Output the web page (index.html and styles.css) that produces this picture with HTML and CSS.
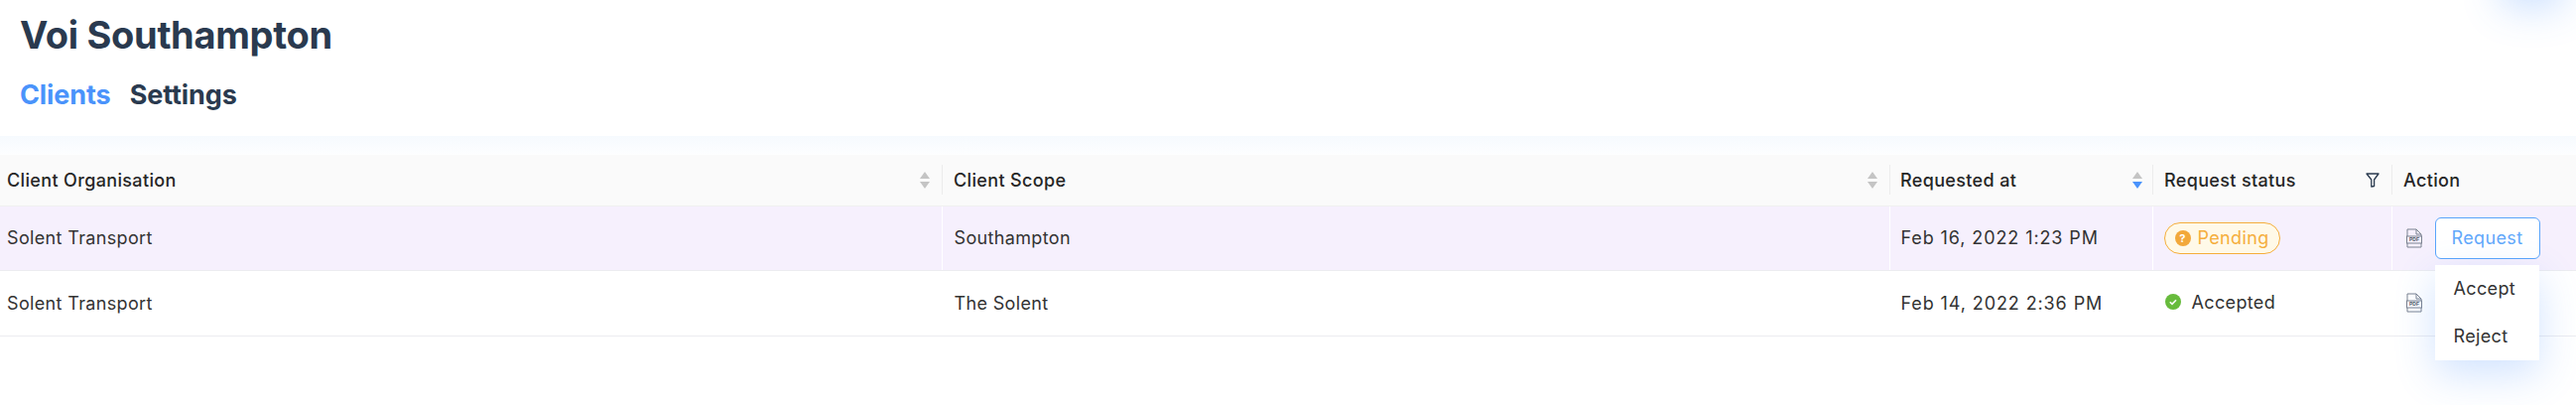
FILE: index.html
```html
<!DOCTYPE html>
<html lang="en">
  <head>
    <meta charset="UTF-8" />
    <title>Voi Southampton</title>
    <link rel="stylesheet" href="styles.css">
  </head>
  <body>
    <div class="corner-glow"></div>
    <header class="page-header">
      <h1>Voi Southampton</h1>
      <nav class="tabs">
        <a class="tab active">Clients</a>
        <a class="tab">Settings</a>
      </nav>
    </header>
    <div class="header-fade"></div>

    <table class="clients">
      <colgroup>
        <col class="col-org" />
        <col class="col-scope" />
        <col class="col-date" />
        <col class="col-status" />
        <col />
      </colgroup>
      <thead>
        <tr>
          <th class="first">
            <div class="th-inner">Client Organisation
              <svg class="sorter" viewBox="0 0 10 17"><path class="off" d="M5 0l5 7H0z" /><path class="off" d="M5 17l5-7H0z" /></svg>
            </div>
          </th>
          <th>
            <div class="th-inner">Client Scope
              <svg class="sorter" viewBox="0 0 10 17"><path class="off" d="M5 0l5 7H0z" /><path class="off" d="M5 17l5-7H0z" /></svg>
            </div>
          </th>
          <th class="date">
            <div class="th-inner">Requested at
              <svg class="sorter" viewBox="0 0 10 17"><path class="off" d="M5 0l5 7H0z" /><path class="on" d="M5 17l5-7H0z" /></svg>
            </div>
          </th>
          <th>
            <div class="th-inner">Request status
              <svg class="filter" viewBox="0 0 14 15"><path d="M1 1h12L8.6 7v6.5L5.8 14V7z" /></svg>
            </div>
          </th>
          <th>Action</th>
        </tr>
      </thead>
      <tbody>
        <tr class="selected">
          <td class="first">Solent Transport</td>
          <td>Southampton</td>
          <td class="date">Feb 16, 2022 1:23 PM</td>
          <td>
            <span class="badge-pending">
              <span class="pending-dot">?</span>Pending
            </span>
          </td>
          <td>
            <div class="action-cell">
              <svg class="pdf" viewBox="0 0 16 20"><path d="M1 8V1h9l5 5v2M1 15v4h14v-4M10 1v5h5" /><rect x="0.5" y="8" width="15" height="7" /><text x="8" y="13.4" text-anchor="middle">PDF</text></svg>
              <div class="request-wrap">
                <button class="request-btn">Request</button>
                <ul class="menu">
                  <li>Accept</li>
                  <li>Reject</li>
                </ul>
              </div>
            </div>
          </td>
        </tr>
        <tr>
          <td class="first">Solent Transport</td>
          <td>The Solent</td>
          <td class="date">Feb 14, 2022 2:36 PM</td>
          <td>
            <span class="status-accepted">
              <svg class="check" viewBox="0 0 16 16"><circle cx="8" cy="8" r="8" /><path d="M4.8 8.2l2.2 2.2 4-4.2" /></svg>Accepted
            </span>
          </td>
          <td>
            <div class="action-cell">
              <svg class="pdf" viewBox="0 0 16 20"><path d="M1 8V1h9l5 5v2M1 15v4h14v-4M10 1v5h5" /><rect x="0.5" y="8" width="15" height="7" /><text x="8" y="13.4" text-anchor="middle">PDF</text></svg>
            </div>
          </td>
        </tr>
      </tbody>
    </table>
  </body>
</html>
```

FILE: styles.css
```css
* {
  margin: 0;
  padding: 0;
  box-sizing: border-box;
}
html,
body {
  height: 408px;
  overflow: hidden;
}
body {
  position: relative;
  font-family: Inter, "Liberation Sans", sans-serif;
  background: #fff;
  color: #262626;
}
.corner-glow {
  position: absolute;
  top: -60px;
  right: 14px;
  width: 60px;
  height: 60px;
  box-shadow: 0 6px 40px rgba(64, 140, 255, 0.3);
}
.page-header {
  height: 137px;
  padding: 13px 20px 0;
}
h1 {
  font-size: 38px;
  line-height: 44px;
  font-weight: 700;
  letter-spacing: -0.3px;
  color: #2a3a4f;
}
.tabs {
  display: flex;
  gap: 19px;
  margin-top: 22px;
}
.tab {
  font-size: 27px;
  line-height: 34px;
  font-weight: 700;
  letter-spacing: -0.1px;
  color: #2a3a4f;
}
.tab.active {
  color: #4a93fb;
}
.header-fade {
  height: 19px;
  background: linear-gradient(to bottom, #f6fafe, #fdfeff);
}
.clients {
  width: 100%;
  table-layout: fixed;
  border-collapse: collapse;
  font-size: 18px;
  letter-spacing: 0.35px;
}
.col-org {
  width: 949px;
}
.col-scope {
  width: 955px;
}
.col-date {
  width: 265px;
}
.col-status {
  width: 241px;
}
th {
  position: relative;
  height: 51px;
  padding: 0 12px;
  background: #fafafa;
  border-bottom: 1px solid #f0f0f0;
  font-weight: 450;
  text-align: left;
}
th + th::before {
  content: "";
  position: absolute;
  left: 0;
  top: 10px;
  height: 30px;
  width: 1px;
  background: #ececec;
}
th.first,
td.first {
  padding-left: 7px;
}
th.date,
td.date {
  padding: 0 10px 0 11px;
}
td.date {
  letter-spacing: 0.9px;
}
.th-inner {
  display: flex;
  align-items: center;
  justify-content: space-between;
}
.sorter {
  width: 10px;
  height: 17px;
}
.sorter .off {
  fill: #c4c4c4;
}
.sorter .on {
  fill: #4a93fb;
}
.filter {
  width: 14px;
  height: 15px;
}
.filter path {
  fill: none;
  stroke: #2a3a4f;
  stroke-width: 1.3;
  stroke-linejoin: round;
}
td {
  height: 65px;
  padding: 0 12px;
  border-bottom: 1px solid #ececf0;
  border-left: 1px solid #fff;
  color: #333;
}
td.first {
  border-left: none;
}
tbody tr + tr td {
  height: 66px;
}
.selected td {
  background: #f6f0fd;
}
.badge-pending {
  display: inline-flex;
  align-items: center;
  height: 32px;
  padding: 0 10px;
  gap: 7px;
  margin-left: -1px;
  background: #fff9e8;
  border: 1px solid #f5ae3c;
  border-radius: 16px;
  color: #f5ae3c;
}
.pending-dot {
  display: flex;
  align-items: center;
  justify-content: center;
  width: 16px;
  height: 16px;
  border-radius: 50%;
  background: #f2a83b;
  color: #fff;
  font-size: 11px;
  font-weight: 700;
}
.status-accepted {
  display: inline-flex;
  align-items: center;
  gap: 11px;
}
.check {
  width: 16px;
  height: 16px;
}
.check circle {
  fill: #67bb3c;
}
.check path {
  fill: none;
  stroke: #fff;
  stroke-width: 1.6;
}
.action-cell {
  display: flex;
  align-items: center;
  gap: 13px;
  margin-left: 2px;
}
.pdf {
  width: 16px;
  height: 20px;
}
.pdf path,
.pdf rect {
  fill: none;
  stroke: #7b8290;
  stroke-width: 1;
}
.pdf text {
  font-family: "Liberation Sans", sans-serif;
  font-size: 5px;
  font-weight: 700;
  fill: #4b5563;
  letter-spacing: 0;
}
.request-wrap {
  position: relative;
}
.request-btn {
  display: block;
  width: 106px;
  height: 42px;
  background: #fff;
  border: 1px solid #5aa5fb;
  border-radius: 6px;
  color: #62a8fb;
  font-family: inherit;
  font-size: 18px;
  letter-spacing: inherit;
}
.menu {
  position: absolute;
  top: 48px;
  left: 0;
  z-index: 2;
  width: 105px;
  height: 96px;
  list-style: none;
  background: #fff;
  padding: 0 19px;
  box-shadow: 0 14px 40px rgba(64, 140, 255, 0.24);
}
.menu li {
  height: 48px;
  line-height: 48px;
}
```
